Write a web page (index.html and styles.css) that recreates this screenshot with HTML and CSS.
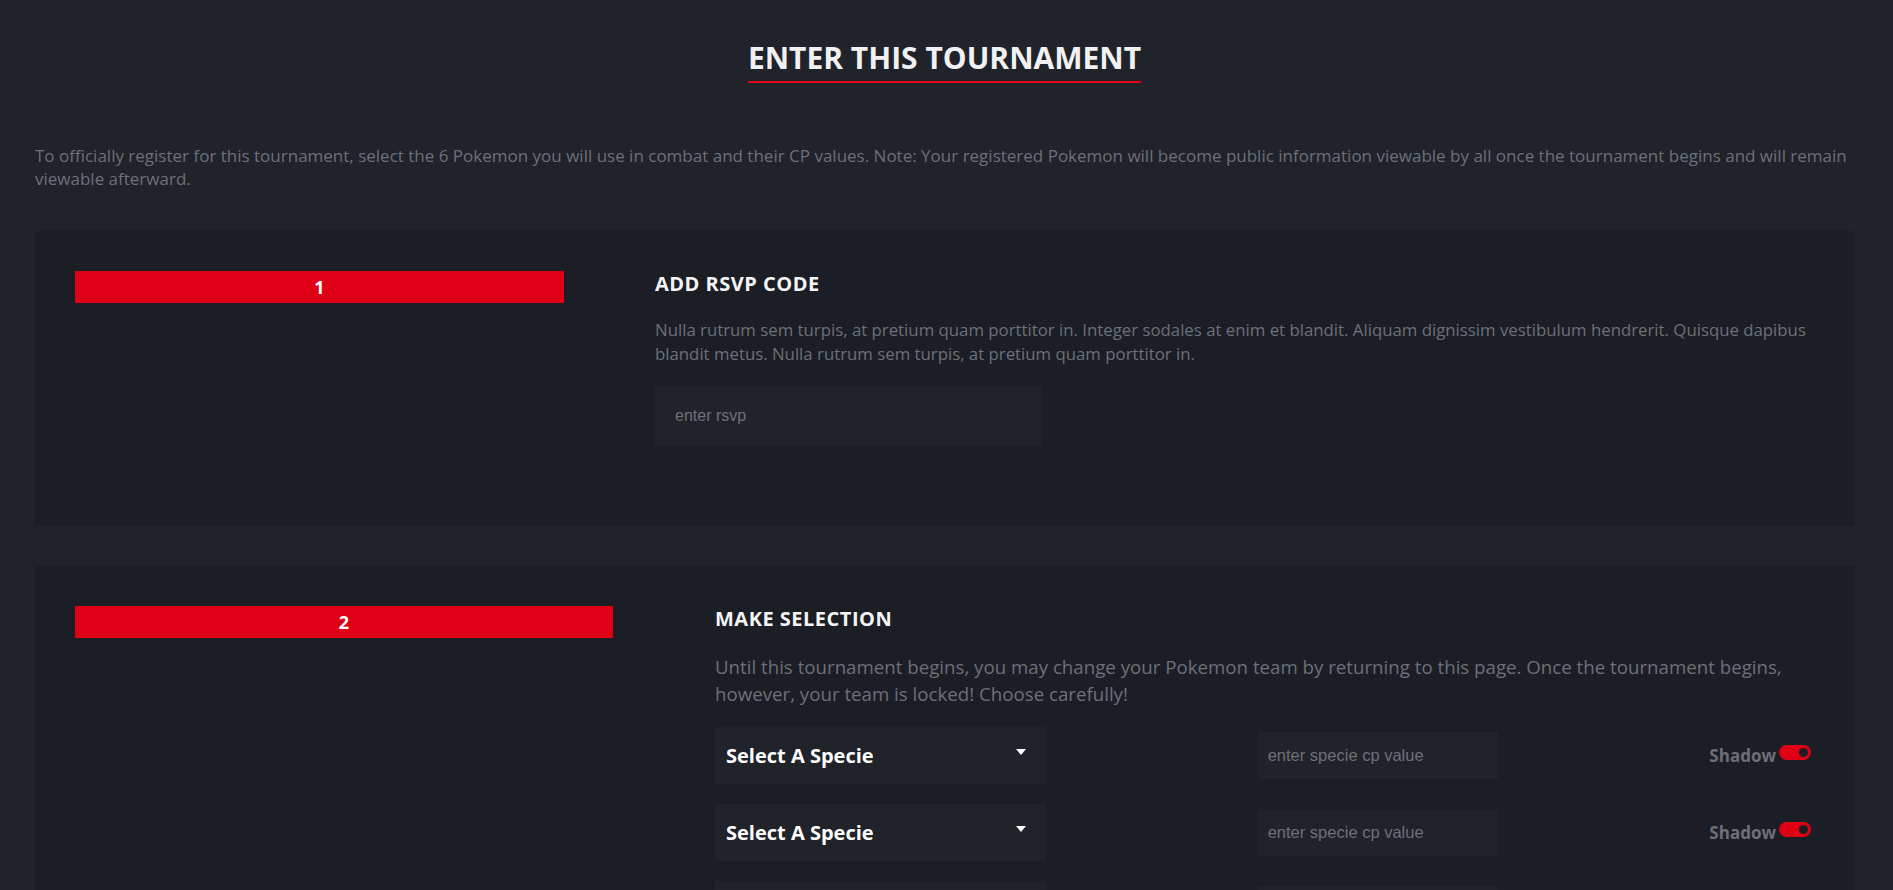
FILE: index.html
```html
<!DOCTYPE html>
<html lang="en">
<head>
<meta charset="utf-8">
<title>Enter This Tournament</title>
<link rel="stylesheet" href="styles.css">
</head>
<body>
<main class="page">
  <header class="page-head">
    <h1 class="page-title">ENTER THIS TOURNAMENT</h1>
  </header>
  <p class="intro">To officially register for this tournament, select the 6 Pokemon you will use in combat and their CP values. Note: Your registered Pokemon will become public information viewable by all once the tournament begins and will remain viewable afterward.</p>

  <section class="step step-rsvp">
    <div class="step-side"><div class="step-num">1</div></div>
    <div class="step-body">
      <h2 class="step-title">ADD RSVP CODE</h2>
      <p class="step-desc">Nulla rutrum sem turpis, at pretium quam porttitor in. Integer sodales at enim et blandit. Aliquam dignissim vestibulum hendrerit. Quisque dapibus blandit metus. Nulla rutrum sem turpis, at pretium quam porttitor in.</p>
      <input class="rsvp-input" type="text" placeholder="enter rsvp">
    </div>
  </section>

  <section class="step step-select">
    <div class="step-side"><div class="step-num">2</div></div>
    <div class="step-body">
      <h2 class="step-title">MAKE SELECTION</h2>
      <p class="step-desc step-desc-lg">Until this tournament begins, you may change your Pokemon team by returning to this page. Once the tournament begins, however, your team is locked! Choose carefully!</p>
      <div class="picks">
        <div class="pick">
          <div class="specie-select"><span>Select A Specie</span><span class="caret"></span></div>
          <input class="cp-input" type="text" placeholder="enter specie cp value">
          <label class="shadow"><span class="shadow-label">Shadow</span><span class="toggle"><span class="knob"></span></span></label>
        </div>
        <div class="pick">
          <div class="specie-select"><span>Select A Specie</span><span class="caret"></span></div>
          <input class="cp-input" type="text" placeholder="enter specie cp value">
          <label class="shadow"><span class="shadow-label">Shadow</span><span class="toggle"><span class="knob"></span></span></label>
        </div>
        <div class="pick">
          <div class="specie-select"><span>Select A Specie</span><span class="caret"></span></div>
          <input class="cp-input" type="text" placeholder="enter specie cp value">
          <label class="shadow"><span class="shadow-label">Shadow</span><span class="toggle"><span class="knob"></span></span></label>
        </div>
      </div>
    </div>
  </section>
</main>
</body>
</html>
```

FILE: styles.css
```css
html, body {
  margin: 0;
  padding: 0;
  background: #20232a;
  overflow: hidden;
}

body {
  font-family: "Open Sans", "Noto Sans", sans-serif;
  color: #6c7079;
}

.page {
  padding: 40px 39px 0 35px;
}

.page-head {
  display: flex;
  justify-content: center;
}

.page-title {
  margin: 0;
  font-size: 30px;
  line-height: 36px;
  font-weight: 700;
  color: #f1f1f3;
  padding-bottom: 5px;
  border-bottom: 2px solid #e00016;
}

.intro {
  margin: 62px 0 41px;
  font-size: 17px;
  line-height: 22.5px;
  color: #6c7079;
}

.step {
  display: grid;
  grid-template-columns: 580px 1fr;
  background: #1b1e25;
  padding: 40px 40px 80px;
  margin-bottom: 40px;
}

.step-select {
  grid-template-columns: 640px 1fr;
}

.step-num {
  width: 489px;
  height: 32px;
  background: #e00016;
  color: #ffffff;
  font-weight: 700;
  font-size: 18px;
  line-height: 32px;
  text-align: center;
}

.step-select .step-num {
  width: 538px;
}

.step-body {
  padding-top: 2px;
}

.step-title {
  margin: 0 0 23px;
  font-size: 20px;
  line-height: 22px;
  font-weight: 700;
  letter-spacing: 0.5px;
  color: #f4f4f6;
}

.step-desc {
  margin: 0 0 20px;
  font-size: 16.8px;
  line-height: 24px;
}

.step-desc-lg {
  font-size: 18.7px;
  line-height: 27px;
}

.rsvp-input {
  display: block;
  width: 387px;
  height: 60px;
  box-sizing: border-box;
  border: none;
  outline: none;
  background: #20232a;
  padding: 0 20px;
  font-family: "Liberation Sans", Arial, sans-serif;
  font-size: 16px;
  color: #c0c4cc;
}

.rsvp-input::placeholder,
.cp-input::placeholder {
  color: #6c7079;
}

.picks {
  display: flex;
  flex-direction: column;
  gap: 20px;
}

.pick {
  display: flex;
  align-items: center;
  justify-content: space-between;
}

.specie-select {
  width: 331px;
  height: 57px;
  box-sizing: border-box;
  background: #20232a;
  padding: 0 20px 0 11px;
  display: flex;
  align-items: center;
  justify-content: space-between;
  color: #ffffff;
  font-size: 20px;
  font-weight: 700;
}

.caret {
  width: 0;
  height: 0;
  border-left: 5px solid transparent;
  border-right: 5px solid transparent;
  border-top: 6px solid #ffffff;
  margin-bottom: 7px;
}

.cp-input {
  width: 240px;
  height: 47px;
  box-sizing: border-box;
  border: none;
  outline: none;
  background: #20232a;
  padding: 0 10px;
  font-family: "Liberation Sans", Arial, sans-serif;
  font-size: 16.5px;
  color: #c0c4cc;
}

.shadow {
  display: flex;
  align-items: center;
  gap: 3px;
  margin-right: 3px;
}

.shadow-label {
  font-size: 17px;
  font-weight: 700;
  color: #6b6f76;
}

.toggle {
  width: 32px;
  height: 15px;
  border-radius: 8px;
  background: #e00016;
  display: flex;
  align-items: center;
  justify-content: flex-end;
  padding-right: 3px;
  box-sizing: border-box;
  margin-bottom: 7px;
}

.knob {
  width: 9px;
  height: 9px;
  border-radius: 50%;
  background: #1b1e25;
}
```
